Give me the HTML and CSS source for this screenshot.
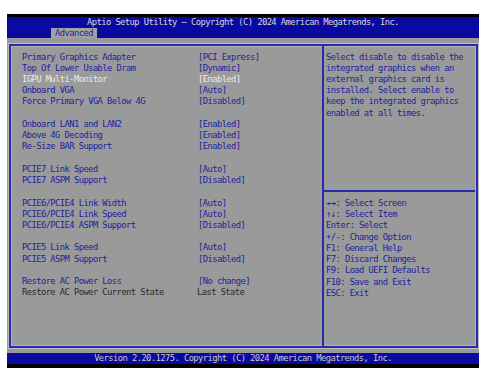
FILE: index.html
```html
<!DOCTYPE html>
<html lang="en">
<head>
  <meta charset="UTF-8">
  <meta name="viewport" content="width=device-width, initial-scale=1.0">
  <title>Aptio Setup Utility - Advanced</title>
  <link rel="stylesheet" href="styles.css">
</head>
<body>
  <div class="screen">
    <!-- タイトルバー -->
    <div class="topbar">
      <div class="title">Aptio Setup Utility – Copyright (C) 2024 American Megatrends, Inc.</div>
      <div class="tabs">
        <span class="tab">Advanced</span>
      </div>
    </div>

    <div class="main">
      <div class="frame">
        <div class="left">
          <div class="row"><span>Primary Graphics Adapter</span><span>[PCI Express]</span></div>
          <div class="row"><span>Top Of Lower Usable Dram</span><span>[Dynamic]</span></div>
          <div class="row selected"><span>IGPU Multi-Monitor</span><span>[Enabled]</span></div>
          <div class="row"><span>Onboard VGA</span><span>[Auto]</span></div>
          <div class="row"><span>Force Primary VGA Below 4G</span><span>[Disabled]</span></div>
          <div class="row blank"></div>
          <div class="row"><span>Onboard LAN1 and LAN2</span><span>[Enabled]</span></div>
          <div class="row"><span>Above 4G Decoding</span><span>[Enabled]</span></div>
          <div class="row"><span>Re-Size BAR Support</span><span>[Enabled]</span></div>
          <div class="row blank"></div>
          <div class="row"><span>PCIE7 Link Speed</span><span>[Auto]</span></div>
          <div class="row"><span>PCIE7 ASPM Support</span><span>[Disabled]</span></div>
          <div class="row blank"></div>
          <div class="row"><span>PCIE6/PCIE4 Link Width</span><span>[Auto]</span></div>
          <div class="row"><span>PCIE6/PCIE4 Link Speed</span><span>[Auto]</span></div>
          <div class="row"><span>PCIE6/PCIE4 ASPM Support</span><span>[Disabled]</span></div>
          <div class="row blank"></div>
          <div class="row"><span>PCIE5 Link Speed</span><span>[Auto]</span></div>
          <div class="row"><span>PCIE5 ASPM Support</span><span>[Disabled]</span></div>
          <div class="row blank"></div>
          <div class="row"><span>Restore AC Power Loss</span><span>[No change]</span></div>
          <div class="row readonly"><span>Restore AC Power Current State</span><span class="plain">Last State</span></div>
        </div>

        <div class="right">
          <div class="desc">
            <div>Select disable to disable the</div>
            <div>integrated graphics when an</div>
            <div>external graphics card is</div>
            <div>installed. Select enable to</div>
            <div>keep the integrated graphics</div>
            <div>enabled at all times.</div>
          </div>
          <div class="keys">
            <div><span class="arrow">↔</span>: Select Screen</div>
            <div>↑↓: Select Item</div>
            <div>Enter: Select</div>
            <div>+/-: Change Option</div>
            <div>F1: General Help</div>
            <div>F7: Discard Changes</div>
            <div>F9: Load UEFI Defaults</div>
            <div>F10: Save and Exit</div>
            <div>ESC: Exit</div>
          </div>
        </div>
      </div>
    </div>

    <!-- フッター -->
    <div class="footer">Version 2.20.1275. Copyright (C) 2024 American Megatrends, Inc.</div>
  </div>
</body>
</html>
```

FILE: styles.css
```css
body {
  margin: 0;
  padding: 0;
  background-color: #fff;
  font-family: "DejaVu Sans Mono", "Liberation Mono", monospace;
  font-size: 8.8px;
  letter-spacing: -0.57px;
}
.screen {
  width: 472px;
  margin: 14px 0 0 7px;
  background-color: #9a9a9a;
}
.topbar {
  border-top: 3px solid #000;
  background-color: #0a0aa0;
  color: #d8d8d8;
}
.title {
  height: 11px;
  line-height: 11px;
  text-align: center;
  white-space: nowrap;
}
.tabs {
  display: flex;
  height: 10px;
  padding-left: 44px;
}
.tab {
  display: block;
  width: 46px;
  line-height: 10px;
  text-align: center;
  background-color: #a2a2a2;
  color: #1e1e9e;
}
.main {
  padding: 6px 1px 5px 2px;
}
.frame {
  display: flex;
  height: 300px;
  border: 2px solid #2a2ab0;
  box-shadow: 0 0 0 1px #bcbcbc, inset 0 0 0 1px #b4b4b4;
}
.left {
  width: 300px;
  padding: 5.5px 0 0 11px;
}
.row {
  display: flex;
  height: 11.24px;
  line-height: 11.24px;
  color: #1e1e9e;
  white-space: nowrap;
}
.row span:first-child {
  width: 176px;
}
.row.selected {
  color: #ececec;
}
.row.readonly {
  color: #2a2a2a;
}
.row .plain {
  margin-left: -1px;
}
.right {
  display: flex;
  flex-direction: column;
  flex-grow: 1;
  border-left: 2px solid #2a2ab0;
  color: #1e1e9e;
  line-height: 11.24px;
  white-space: nowrap;
}
.desc {
  height: 138.5px;
  padding: 5.5px 0 0 2px;
  border-bottom: 2px solid #2a2ab0;
  margin-right: 1px;
}
.keys {
  padding: 6px 0 0 2px;
}
.arrow {
  display: inline-block;
  width: 9.4px;
  transform: scaleX(2);
  transform-origin: left center;
}
.footer {
  height: 11px;
  line-height: 11px;
  background-color: #0a0aa0;
  border-bottom: 4px solid #000;
  color: #c8c8c8;
  text-align: center;
  white-space: nowrap;
}
```
